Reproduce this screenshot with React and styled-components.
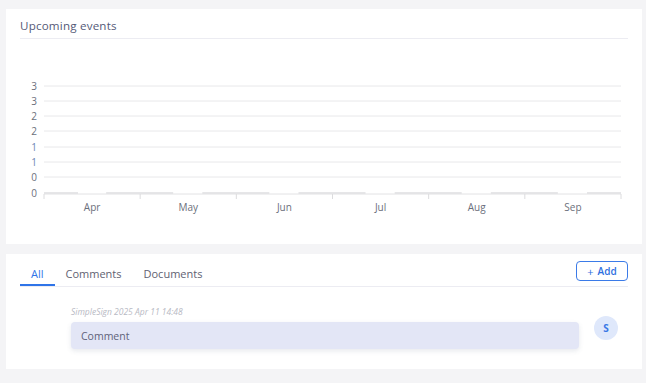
import React from "react"
import styled, { createGlobalStyle } from "styled-components"

const GlobalStyle = createGlobalStyle`
  body {
    margin: 0;
    background: #f4f4f6;
    font-family: "Open Sans", "Liberation Sans", sans-serif;
  }
`

const months = ["Apr", "May", "Jun", "Jul", "Aug", "Sep"]
const yLabels = ["3", "3", "2", "2", "1", "1", "0", "0"]
const yRows = [47, 62, 77, 92, 108, 123, 138, 154]

const CHART_LEFT = 24
const CHART_RIGHT = 601
const STEP = (CHART_RIGHT - CHART_LEFT) / 6

function EventsChart() {
  const ticks = Array.from({ length: 7 }, (_, i) => CHART_LEFT + i * STEP)
  return (
    <svg width="608" height="205" viewBox="0 0 608 205">
      {yRows.map((y, i) => (
        <g key={i}>
          {i < yRows.length - 1 && (
            <line x1={CHART_LEFT} x2={CHART_RIGHT} y1={y} y2={y} stroke="#e8e8ea" strokeWidth="1" />
          )}
          <text
            x="17"
            y={y + 3.5}
            textAnchor="end"
            fontSize="10"
            fill={yLabels[i] === "1" ? "#6d86b3" : "#6b6f7b"}
          >
            {yLabels[i]}
          </text>
        </g>
      ))}
      {ticks.map((x, i) => (
        <rect
          key={"b" + i}
          x={Math.max(CHART_LEFT, x - 34)}
          width={i === 0 ? 34 : i === 6 ? 34 : 67}
          y={153}
          height={2}
          fill="#e6e6e8"
        />
      ))}
      <line x1={CHART_LEFT} x2={CHART_RIGHT} y1={155} y2={155} stroke="#e2e2e4" />
      {ticks.map((x, i) => (
        <line key={"t" + i} x1={x} x2={x} y1={155} y2={160} stroke="#dcdcde" />
      ))}
      {months.map((m, i) => (
        <text
          key={m}
          x={CHART_LEFT + STEP * (i + 0.5)}
          y={171.5}
          textAnchor="middle"
          fontSize="10"
          fill="#6b6f7b"
        >
          {m}
        </text>
      ))}
    </svg>
  )
}

export default function App() {
  return (
    <Page>
      <GlobalStyle />
      <Card>
        <CardHeader>
          <Title>Upcoming events</Title>
        </CardHeader>
        <ChartWrap>
          <EventsChart />
        </ChartWrap>
      </Card>
      <Card>
        <TabBar>
          <Tabs>
            <Tab active>All</Tab>
            <Tab>Comments</Tab>
            <Tab>Documents</Tab>
          </Tabs>
          <AddButton>
            <span>+</span> Add
          </AddButton>
        </TabBar>
        <CommentRow>
          <CommentBody>
            <Meta>SimpleSign 2025 Apr 11 14:48</Meta>
            <CommentBox>Comment</CommentBox>
          </CommentBody>
          <Avatar>S</Avatar>
        </CommentRow>
      </Card>
    </Page>
  )
}

const Page = styled.div`
  display: flex;
  flex-direction: column;
  gap: 10px;
  padding: 9px 4px 14px 6px;
`

const Card = styled.div`
  background: #fff;
  padding: 0 14px;
`

const CardHeader = styled.div`
  height: 26px;
  padding-top: 3px;
  display: flex;
  align-items: center;
  border-bottom: 1px solid #ececf2;
`

const Title = styled.h2`
  margin: 0;
  font-size: 11.6px;
  font-weight: 500;
  color: #555a78;
  letter-spacing: 0.2px;
`

const ChartWrap = styled.div`
  height: 205px;
  display: flex;
`

const TabBar = styled.div`
  display: flex;
  justify-content: space-between;
  align-items: flex-start;
  border-bottom: 1px solid #ececf2;
`

const Tabs = styled.div`
  display: flex;
`

const Tab = styled.div`
  padding: 13px 11px 3px;
  line-height: 14px;
  font-size: 11px;
  color: ${p => (p.active ? "#2f74e8" : "#5f6272")};
  border-bottom: 2px solid ${p => (p.active ? "#2f74e8" : "transparent")};
  cursor: pointer;
`

const AddButton = styled.button`
  margin-top: 7px;
  height: 20px;
  width: 52px;
  padding: 0;
  border: 1px solid #3b7be8;
  border-radius: 4px;
  background: #fff;
  color: #2f6fe0;
  font-family: inherit;
  font-size: 10px;
  font-weight: 600;
  display: flex;
  align-items: center;
  justify-content: center;
  gap: 4px;

  span {
    font-weight: 400;
    font-size: 11px;
  }
`

const CommentRow = styled.div`
  display: flex;
  align-items: flex-start;
  gap: 15px;
  padding: 19px 10px 20px 51px;
`

const CommentBody = styled.div`
  flex: 1;
  display: flex;
  flex-direction: column;
  gap: 5px;
`

const Meta = styled.div`
  font-size: 8.5px;
  font-style: italic;
  color: #b8bac4;
  line-height: 11px;
`

const CommentBox = styled.div`
  height: 27px;
  display: flex;
  align-items: center;
  padding: 0 10px;
  background: #e3e6f6;
  border-radius: 4px;
  box-shadow: 0 2px 5px rgba(60, 70, 110, 0.12);
  font-size: 10.5px;
  color: #60637a;
`

const Avatar = styled.div`
  margin-top: 10px;
  width: 24px;
  height: 24px;
  border-radius: 50%;
  background: #dfe8fb;
  color: #3a78e6;
  font-size: 10px;
  font-weight: 700;
  display: flex;
  align-items: center;
  justify-content: center;
`
